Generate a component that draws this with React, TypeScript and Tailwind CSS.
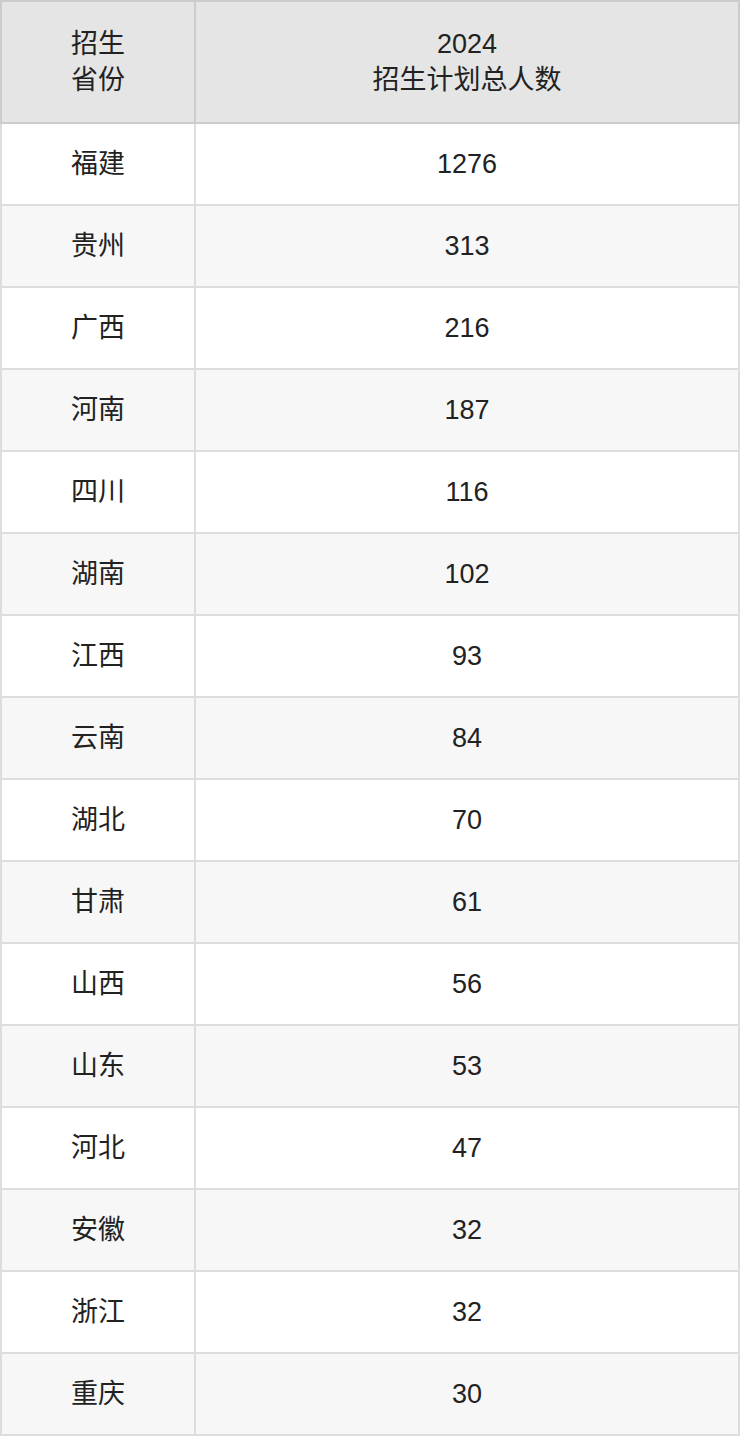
const ROWS: [string, number][] = [
  ['福建', 1276],
  ['贵州', 313],
  ['广西', 216],
  ['河南', 187],
  ['四川', 116],
  ['湖南', 102],
  ['江西', 93],
  ['云南', 84],
  ['湖北', 70],
  ['甘肃', 61],
  ['山西', 56],
  ['山东', 53],
  ['河北', 47],
  ['安徽', 32],
  ['浙江', 32],
  ['重庆', 30],
]

export default function App() {
  return (
    <div
      className="w-[740px] bg-white text-[#222] text-[27px]"
      style={{ fontFamily: '"Liberation Sans", "Noto Sans CJK SC", sans-serif' }}
    >
      <table className="w-full border-collapse table-fixed">
        <colgroup>
          <col className="w-[194px]" />
          <col />
        </colgroup>
        <thead>
          <tr className="bg-[#e5e5e5]">
            <th className="h-[122px] border-2 border-[#cccccc] font-normal leading-[36px] text-center align-middle">
              招生
              <br />
              省份
            </th>
            <th className="border-2 border-[#cccccc] font-normal leading-[36px] text-center align-middle">
              2024
              <br />
              招生计划总人数
            </th>
          </tr>
        </thead>
        <tbody>
          {ROWS.map(([prov, n], i) => (
            <tr key={prov} className={i % 2 === 1 ? 'bg-[#f7f7f7]' : 'bg-white'}>
              <td className="h-[82px] border-2 border-[#dddddd] text-center align-middle">{prov}</td>
              <td className="border-2 border-[#dddddd] text-center align-middle">{n}</td>
            </tr>
          ))}
        </tbody>
      </table>
    </div>
  )
}
